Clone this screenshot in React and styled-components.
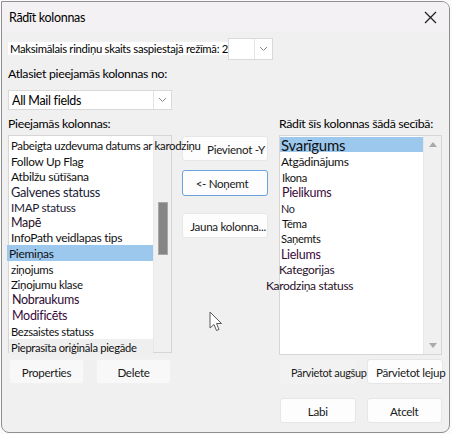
import React from 'react';
import styled, { createGlobalStyle } from 'styled-components';

const GlobalStyle = createGlobalStyle`
  html, body { margin: 0; padding: 0; background: #fbfbfb; }
  body {
    font-family: Lato, "Liberation Sans", Arial, sans-serif;
    font-size: 12px;
    letter-spacing: -0.3px;
    color: #000;
  }
`;

const Dialog = styled.div`
  position: relative;
  margin: 1px 0 0 1px;
  width: 447px;
  height: 430px;
  border: 1px solid #8f8f8f;
  border-radius: 0 8px 8px 8px;
  background: #f0f0f0;
  display: flex;
  flex-direction: column;
  overflow: hidden;
`;

const TitleBar = styled.div`
  height: 30px;
  flex: none;
  background: #f4f1f4;
  display: flex;
  align-items: center;
  justify-content: space-between;
  padding: 0 12px 0 7px;
  font-size: 12.5px;
`;

const CloseBtn = styled.div`
  width: 14px;
  height: 14px;
  display: flex;
  align-items: center;
  justify-content: center;
`;

const Body = styled.div`
  flex: 1;
  padding: 6px 6px 0 6px;
  display: flex;
  flex-direction: column;
`;

const MaxRow = styled.div`
  display: flex;
  align-items: center;
  height: 21px;
`;

const WhiteLabel = styled.span`
  background: #fff;
  font-size: 11.3px;
  line-height: 13px;
  padding: 0 6px 0 2px;
  white-space: nowrap;
`;

const Combo = styled.div`
  display: flex;
  align-items: stretch;
  width: ${p => p.$w}px;
  height: ${p => p.$h}px;
  margin-left: ${p => p.$ml || 0}px;
  margin-top: ${p => p.$mt || 0}px;
  background: #fff;
  border: 1px solid #d9d9d9;
  box-sizing: border-box;
  font-size: 12.5px;
`;

const ComboText = styled.div`
  flex: 1;
  display: flex;
  align-items: center;
  padding-left: 3px;
`;

const ComboArrow = styled.div`
  width: 17px;
  border-left: 1px solid #e3e3e3;
  display: flex;
  align-items: center;
  justify-content: center;
`;

const Label = styled.div`
  font-size: 12.3px;
  line-height: 14px;
  margin-top: ${p => p.$mt || 0}px;
  white-space: nowrap;
`;

const Grid = styled.div`
  display: grid;
  grid-template-columns: 164px 87px 163px;
  column-gap: 10px;
  margin-top: 7px;
`;

const ListBox = styled.div`
  display: flex;
  height: ${p => p.$h}px;
  margin-top: 4px;
  background: #fff;
  border: 1px solid #d6d6d6;
  box-sizing: border-box;
`;

const Items = styled.div`
  flex: 1;
  position: relative;
  z-index: 2;
  padding-top: ${p => p.$pt}px;
  min-width: 0;
`;

const Item = styled.div`
  height: ${p => p.$h}px;
  display: flex;
  align-items: center;
  padding-left: ${p => p.$pl}px;
  margin-left: ${p => p.$ml || 0}px;
  font-size: ${p => p.$fs || 11.5}px;
  color: ${p => p.$c || '#111'};
  white-space: nowrap;
  background: ${p => (p.$sel ? '#9cc8ee' : p.$grey ? '#efefef' : 'transparent')};
`;

const Track = styled.div`
  width: ${p => p.$w}px;
  flex: none;
  background: #f0f0f0;
  border-left: 1px solid #e8e8e8;
  display: flex;
  flex-direction: column;
  align-items: center;
  justify-content: ${p => (p.$arrows ? 'space-between' : 'flex-start')};
  padding: 6px 0;
  box-sizing: border-box;
`;

const Thumb = styled.div`
  width: 10px;
  height: 53px;
  margin-top: 60px;
  background: #858585;
  border: 1px solid #a8a8a8;
  box-sizing: border-box;
`;

const Tri = styled.div`
  width: 0;
  height: 0;
  border-left: 4px solid transparent;
  border-right: 4px solid transparent;
  ${p => (p.$down ? 'border-top: 5px solid #a9a9a9;' : 'border-bottom: 5px solid #a9a9a9;')}
`;

const Middle = styled.div`
  display: flex;
  flex-direction: column;
  padding-top: 5px;
`;

const Button = styled.div`
  position: relative;
  height: ${p => p.$h || 25}px;
  width: ${p => p.$w || 76}px;
  margin-top: ${p => p.$mt || 0}px;
  box-sizing: border-box;
  display: flex;
  align-items: center;
  justify-content: ${p => (p.$start ? 'flex-start' : 'center')};
  padding: 1px ${p => p.$pr || 0}px 0 ${p => p.$pl || 0}px;
  font-size: ${p => p.$fs || 11.6}px;
  white-space: nowrap;
  background: ${p => p.$bg || '#fdfdfd'};
  border: 1px solid ${p => p.$bd || '#e6e6e6'};
  border-radius: 3px;
  color: #1a1a1a;
`;

const ButtonRow = styled.div`
  display: flex;
  gap: ${p => p.$gap}px;
  margin-top: ${p => p.$mt}px;
  padding-left: ${p => p.$pl || 0}px;
`;

const Cursor = styled.svg`
  position: absolute;
  left: 207px;
  top: 309px;
`;

const leftItems = [
  { t: 'Pabeigta uzdevuma datums ar karodziņu', h: 16, fs: 11.4 },
  { t: 'Follow Up Flag', h: 16, fs: 11.8 },
  { t: 'Atbilžu sūtīšana', h: 15, fs: 12 },
  { t: 'Galvenes statuss', h: 15, fs: 12.8, c: '#1b1b33' },
  { t: 'IMAP statuss', h: 16, fs: 11.8, c: '#1b1b33' },
  { t: 'Mapē', h: 15, fs: 12.5, c: '#2a0f2a' },
  { t: 'InfoPath veidlapas tips', h: 15, fs: 12 },
  { t: 'Piemiņas', h: 16, sel: true, ml: -2, fs: 12 },
  { t: 'ziņojums', h: 16, fs: 11.5 },
  { t: 'Ziņojumu klase', h: 14, fs: 11.5 },
  { t: 'Nobraukums', h: 16, fs: 12.5, c: '#2e0a33', ml: 1 },
  { t: 'Modificēts', h: 16, fs: 12.5, c: '#3a0a3a', ml: 1 },
  { t: 'Bezsaistes statuss', h: 16, fs: 11.2 },
  { t: 'Pieprasīta oriģināla piegāde', h: 16, grey: true, fs: 11.2 },
];

const rightItems = [
  { t: 'Svarīgums', h: 15, fs: 15, sel: true },
  { t: 'Atgādinājums', h: 18, fs: 12 },
  { t: 'Ikona', h: 15, fs: 11.2, ml: 1 },
  { t: 'Pielikums', h: 15, fs: 12.5, c: '#3a0a3a', ml: 1 },
  { t: 'No', h: 16, fs: 10.8, c: '#1b1b33' },
  { t: 'Tēma', h: 15, fs: 11.2, ml: 1 },
  { t: 'Saņemts', h: 15, fs: 11.2 },
  { t: 'Lielums', h: 16, fs: 12.5, c: '#3a0a3a' },
  { t: 'Kategorijas', h: 15, fs: 12, c: '#2a0f2a', ml: -2 },
  { t: 'Karodziņa statuss', h: 16, fs: 12, c: '#2a0f2a', ml: -15 },
];

const Chevron = () => (
  <svg width="9" height="6" viewBox="0 0 9 6">
    <path d="M1 1 L4.5 4.5 L8 1" fill="none" stroke="#8a8a8a" strokeWidth="1" />
  </svg>
);

export default function App() {
  return (
    <>
      <GlobalStyle />
      <Dialog>
        <TitleBar>
          <span>Rādīt kolonnas</span>
          <CloseBtn>
            <svg width="13" height="13" viewBox="0 0 13 13">
              <path d="M1 1 L12 12 M12 1 L1 12" stroke="#222" strokeWidth="1.3" />
            </svg>
          </CloseBtn>
        </TitleBar>
        <Body>
          <MaxRow>
            <WhiteLabel>Maksimālais rindiņu skaits saspiestajā režīmā: 2</WhiteLabel>
            <Combo $w={45} $h={22} $ml={-6}>
              <ComboText />
              <ComboArrow>
                <Chevron />
              </ComboArrow>
            </Combo>
          </MaxRow>
          <Label $mt={8}>Atlasiet pieejamās kolonnas no:</Label>
          <Combo $w={164} $h={20} $mt={9}>
            <ComboText>All Mail fields</ComboText>
            <ComboArrow>
              <Chevron />
            </ComboArrow>
          </Combo>
          <Grid>
            <div>
              <Label>Pieejamās kolonnas:</Label>
              <ListBox $h={218}>
                <Items $pt={1}>
                  {leftItems.map(it => (
                    <Item
                      key={it.t}
                      $h={it.h}
                      $pl={2}
                      $ml={it.ml}
                      $fs={it.fs}
                      $c={it.c}
                      $sel={it.sel}
                      $grey={it.grey}
                    >
                      {it.t}
                    </Item>
                  ))}
                </Items>
                <Track $w={18}>
                  <Thumb />
                </Track>
              </ListBox>
              <ButtonRow $gap={12} $mt={6} $pl={1}>
                <Button $w={75} $bg="#f8f8f8" $bd="#f1f1f1">Properties</Button>
                <Button $w={75} $bg="#f8f8f8" $bd="#f1f1f1">Delete</Button>
              </ButtonRow>
            </div>
            <Middle>
              <Label>&nbsp;</Label>
              <Button $w={86} $pl={22}>Pievienot -Y</Button>
              <Button $w={86} $h={26} $mt={9} $bd="#6aa2dc" $pr={6}>&lt;- Noņemt</Button>
              <Button $w={86} $mt={17} $pl={6}>Jauna kolonna...</Button>
            </Middle>
            <div>
              <Label>Rādīt šīs kolonnas šādā secībā:</Label>
              <ListBox $h={220}>
                <Items $pt={1}>
                  {rightItems.map(it => (
                    <Item
                      key={it.t}
                      $h={it.h}
                      $pl={1}
                      $ml={it.ml}
                      $fs={it.fs}
                      $c={it.c}
                      $sel={it.sel}
                    >
                      {it.t}
                    </Item>
                  ))}
                </Items>
                <Track $w={18} $arrows>
                  <Tri />
                  <Tri $down />
                </Track>
              </ListBox>
              <ButtonRow $gap={11} $mt={4} $pl={1}>
                <Button $w={76} $bg="#f2f2f2" $bd="#f2f2f2" $start $pl={10} $fs={10.9}>Pārvietot augšup</Button>
                <Button $w={76} $start $pl={8}>Pārvietot lejup</Button>
              </ButtonRow>
              <ButtonRow $gap={11} $mt={14} $pl={1}>
                <Button $w={76}>Labi</Button>
                <Button $w={76}>Atcelt</Button>
              </ButtonRow>
            </div>
          </Grid>
        </Body>
        <Cursor width="14" height="22" viewBox="0 0 14 22">
          <path
            d="M1 1 L1 17 L5 13.5 L7.5 19.5 L10 18.5 L7.5 12.5 L12.5 12.5 Z"
            fill="#fff"
            stroke="#5a5a5a"
            strokeWidth="1"
            strokeLinejoin="round"
          />
        </Cursor>
      </Dialog>
    </>
  );
}
